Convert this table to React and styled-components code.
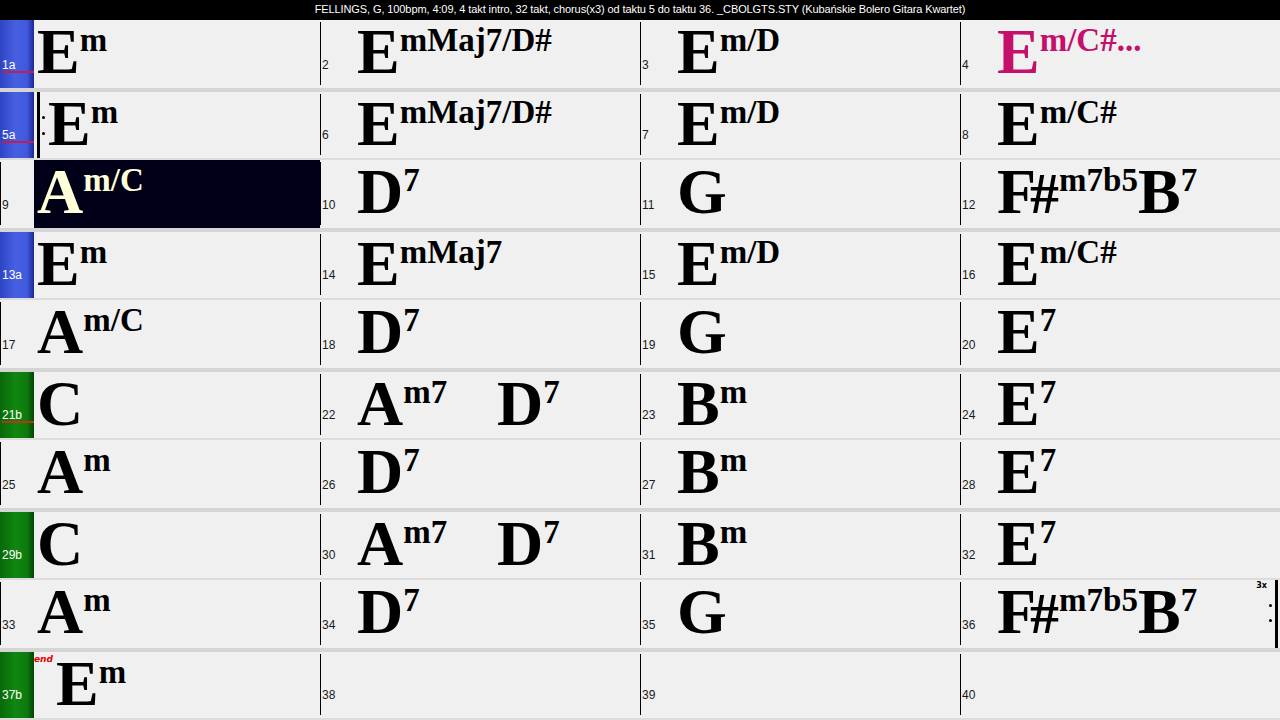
import React from "react";
import styled, { createGlobalStyle } from "styled-components";

const GlobalStyle = createGlobalStyle`
  html, body {
    margin: 0;
    padding: 0;
    background: #f0f0f0;
  }
`;

const blueGrad = "linear-gradient(to right, #2d44c4 0%, #4760e2 45%, #4058dc 80%, #1b2894 100%)";
const greenGrad = "linear-gradient(to right, #086808 0%, #118611 45%, #0d7a0d 80%, #024402 100%)";

const Screen = styled.div`
  width: 1280px;
  height: 720px;
  display: flex;
  flex-direction: column;
  background: #f0f0f0;
  overflow: hidden;
`;

const TitleBar = styled.div`
  flex: none;
  height: 20px;
  background: #000;
  color: #fff;
  font-family: "Liberation Sans", Arial, sans-serif;
  font-size: 11px;
  letter-spacing: -0.1px;
  line-height: 18px;
  text-align: center;
  white-space: nowrap;
`;

const Row = styled.div`
  flex: none;
  display: grid;
  grid-template-columns: repeat(4, 320px);
  height: ${(p) => (p.$thick ? 68 : 66)}px;
  border-bottom: ${(p) => (p.$thick ? "4px solid #d5d5d5" : "2px solid #dcdcdc")};
`;

const Bar = styled.div`
  display: flex;
  min-width: 0;
  background: linear-gradient(#000, #000) left 2px / 1px calc(100% - 5px) no-repeat;
`;

const BarNum = styled.div`
  flex: none;
  width: 34px;
  box-sizing: border-box;
  display: flex;
  flex-direction: column;
  justify-content: flex-end;
  align-items: stretch;
  padding: 0 0 15px 2px;
  background: ${(p) => (p.$tone === "blue" ? blueGrad : p.$tone === "green" ? greenGrad : "transparent")};
  color: ${(p) => (p.$tone ? "#fff" : "#1a1a1a")};
  font-family: "Liberation Sans", Arial, sans-serif;
  font-size: 12px;
  line-height: 12px;
`;

const NumText = styled.span`
  border-bottom: 2px solid ${(p) => p.$mark || "transparent"};
`;

const Chords = styled.div`
  flex: 1;
  min-width: 0;
  display: flex;
  align-items: flex-start;
  padding-left: 3px;
  background: ${(p) => (p.$active ? "#000018" : "transparent")};
  color: ${(p) => (p.$active ? "#ffffd8" : p.$color || "#000")};
`;

const Chord = styled.div`
  flex: none;
  display: flex;
  align-items: flex-start;
  min-width: ${(p) => (p.$spaced ? "140px" : "0")};
  font-family: "Liberation Serif", "Times New Roman", serif;
  font-weight: bold;
  white-space: nowrap;
`;

const Root = styled.span`
  font-size: 64px;
  line-height: 64px;
`;

const Sharp = styled.span`
  font-size: 58px;
  margin-left: -6px;
`;

const Ext = styled.span`
  font-size: 33px;
  line-height: 33px;
  margin-top: 4px;
`;

const RepeatStart = styled.div`
  flex: none;
  align-self: stretch;
  width: 8px;
  border-left: 3px solid #000;
  display: flex;
  flex-direction: column;
  justify-content: center;
  gap: 13px;
`;

const Dot = styled.span`
  display: block;
  width: 3px;
  height: 3px;
  border-radius: 50%;
  background: #000;
  margin-left: 2px;
`;

const RepeatEnd = styled.div`
  flex: none;
  margin-left: auto;
  margin-right: 2px;
  align-self: stretch;
  display: flex;
  border-right: 3px solid #000;
`;

const TimesMark = styled.span`
  align-self: flex-start;
  margin-top: 2px;
  font-family: "DejaVu Sans", sans-serif;
  font-weight: bold;
  font-size: 8px;
  line-height: 8px;
  color: #000;
`;

const DotCol = styled.div`
  display: flex;
  flex-direction: column;
  justify-content: center;
  gap: 12px;
  padding: 0 3px 3px 0;
`;

const EndTag = styled.span`
  flex: none;
  margin: 3px 3px 0 -3px;
  color: #e00000;
  font-family: "DejaVu Sans", sans-serif;
  font-style: italic;
  font-weight: bold;
  font-size: 9px;
  line-height: 9px;
`;

const title =
  "FELLINGS, G, 100bpm, 4:09, 4 takt intro, 32 takt, chorus(x3) od taktu 5 do taktu 36. _CBOLGTS.STY (Kubańskie Bolero Gitara Kwartet)";

const rows = [
  [
    { n: "1a", tone: "blue", mark: "#c41e4e", chords: [["E", "m"]] },
    { n: "2", chords: [["E", "mMaj7/D#"]] },
    { n: "3", chords: [["E", "m/D"]] },
    { n: "4", chords: [["E", "m/C#..."]], color: "#c4106a" },
  ],
  [
    { n: "5a", tone: "blue", mark: "#c41e4e", repeatStart: true, chords: [["E", "m"]] },
    { n: "6", chords: [["E", "mMaj7/D#"]] },
    { n: "7", chords: [["E", "m/D"]] },
    { n: "8", chords: [["E", "m/C#"]] },
  ],
  [
    { n: "9", active: true, chords: [["A", "m/C"]] },
    { n: "10", chords: [["D", "7"]] },
    { n: "11", chords: [["G", ""]] },
    { n: "12", chords: [["F#", "m7b5"], ["B", "7"]] },
  ],
  [
    { n: "13a", tone: "blue", chords: [["E", "m"]] },
    { n: "14", chords: [["E", "mMaj7"]] },
    { n: "15", chords: [["E", "m/D"]] },
    { n: "16", chords: [["E", "m/C#"]] },
  ],
  [
    { n: "17", chords: [["A", "m/C"]] },
    { n: "18", chords: [["D", "7"]] },
    { n: "19", chords: [["G", ""]] },
    { n: "20", chords: [["E", "7"]] },
  ],
  [
    { n: "21b", tone: "green", mark: "#b8360e", chords: [["C", ""]] },
    { n: "22", chords: [["A", "m7"], ["D", "7"]] },
    { n: "23", chords: [["B", "m"]] },
    { n: "24", chords: [["E", "7"]] },
  ],
  [
    { n: "25", chords: [["A", "m"]] },
    { n: "26", chords: [["D", "7"]] },
    { n: "27", chords: [["B", "m"]] },
    { n: "28", chords: [["E", "7"]] },
  ],
  [
    { n: "29b", tone: "green", chords: [["C", ""]] },
    { n: "30", chords: [["A", "m7"], ["D", "7"]] },
    { n: "31", chords: [["B", "m"]] },
    { n: "32", chords: [["E", "7"]] },
  ],
  [
    { n: "33", chords: [["A", "m"]] },
    { n: "34", chords: [["D", "7"]] },
    { n: "35", chords: [["G", ""]] },
    { n: "36", chords: [["F#", "m7b5"], ["B", "7"]], repeatEnd: "3x" },
  ],
  [
    { n: "37b", tone: "green", end: true, chords: [["E", "m"]] },
    { n: "38", chords: [] },
    { n: "39", chords: [] },
    { n: "40", chords: [] },
  ],
];

const RootName = ({ name }) =>
  name.endsWith("#") ? (
    <Root>
      {name.slice(0, -1)}
      <Sharp>#</Sharp>
    </Root>
  ) : (
    <Root>{name}</Root>
  );

const BarCell = ({ bar }) => (
  <Bar>
    <BarNum $tone={bar.tone}>
      <NumText $mark={bar.mark}>{bar.n}</NumText>
    </BarNum>
    <Chords $active={bar.active} $color={bar.color}>
      {bar.end && <EndTag>end</EndTag>}
      {bar.repeatStart && (
        <RepeatStart>
          <Dot />
          <Dot />
        </RepeatStart>
      )}
      {bar.chords.map(([root, ext], i) => (
        <Chord key={i} $spaced={i < bar.chords.length - 1}>
          <RootName name={root} />
          {ext && <Ext>{ext}</Ext>}
        </Chord>
      ))}
      {bar.repeatEnd && (
        <RepeatEnd>
          <TimesMark>{bar.repeatEnd}</TimesMark>
          <DotCol>
            <Dot />
            <Dot />
          </DotCol>
        </RepeatEnd>
      )}
    </Chords>
  </Bar>
);

const App = () => (
  <Screen>
    <GlobalStyle />
    <TitleBar>{title}</TitleBar>
    {rows.map((row, i) => (
      <Row key={i} $thick={i % 2 === 0}>
        {row.map((bar) => (
          <BarCell key={bar.n} bar={bar} />
        ))}
      </Row>
    ))}
  </Screen>
);

export default App;
